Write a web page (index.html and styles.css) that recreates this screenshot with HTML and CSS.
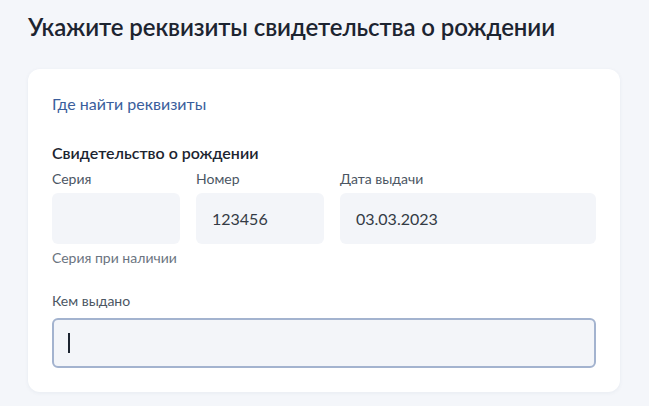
FILE: index.html
```html
<!DOCTYPE html>
<html lang="ru">
<head>
<meta charset="utf-8">
<link rel="stylesheet" href="styles.css">
</head>
<body>
<div class="page">
  <h1 class="title">Укажите реквизиты свидетельства о рождении</h1>
  <div class="card">
    <a class="link" href="#">Где найти реквизиты</a>
    <div class="section-title">Свидетельство о рождении</div>
    <div class="row">
      <div class="field field-series">
        <div class="label">Серия</div>
        <div class="input"></div>
        <div class="hint">Серия при наличии</div>
      </div>
      <div class="field field-number">
        <div class="label">Номер</div>
        <div class="input">123456</div>
      </div>
      <div class="field field-date">
        <div class="label">Дата выдачи</div>
        <div class="input">03.03.2023</div>
      </div>
    </div>
    <div class="field field-issuer">
      <div class="label label-issuer">Кем выдано</div>
      <div class="input input-focus"><span class="caret"></span></div>
    </div>
  </div>
</div>
</body>
</html>
```
FILE: styles.css
```css
* { box-sizing: border-box; }
html, body { margin: 0; padding: 0; }
body {
  background: #f4f6fa;
  font-family: Lato, "Noto Sans", sans-serif;
  color: #0b1f33;
  width: 649px;
  height: 406px;
  overflow: hidden;
}
.page {
  padding: 11px 29px 0 28px;
}
.title {
  margin: 0;
  font-size: 24px;
  line-height: 32px;
  font-weight: 600;
  color: #1c2430;
  letter-spacing: -0.1px;
}
.card {
  margin-top: 26px;
  background: #ffffff;
  border-radius: 12px;
  padding: 24px 24px 24px 24px;
  box-shadow: 0 1px 4px rgba(40, 60, 100, 0.06);
  display: flex;
  flex-direction: column;
}
.link {
  display: block;
  font-size: 16px;
  line-height: 22px;
  color: #3a5e9c;
  text-decoration: none;
}
.section-title {
  margin-top: 27px;
  font-size: 16px;
  line-height: 22px;
  font-weight: 600;
  color: #1c2430;
}
.row {
  display: flex;
  gap: 16px;
  margin-top: 5px;
}
.field { display: flex; flex-direction: column; }
.field-series, .field-number { width: 128px; }
.field-date { width: 256px; }
.label {
  font-size: 14px;
  line-height: 20px;
  color: #4b5663;
  margin-bottom: 4px;
}
.input {
  height: 51px;
  background: #f3f5f9;
  border-radius: 6px;
  padding: 0 16px;
  display: flex;
  align-items: center;
  font-size: 16px;
  color: #333b45;
}
.hint {
  margin-top: 5px;
  font-size: 14px;
  line-height: 18px;
  color: #6b7480;
}
.field-issuer { margin-top: 24px; }
.label-issuer { margin-bottom: 7px; }
.input-focus {
  height: 50px;
  border: 2px solid #a3b3cf;
  border-radius: 6px;
  padding: 0 14px;
}
.caret {
  display: block;
  width: 1.5px;
  height: 20px;
  background: #1c2430;
}
```
